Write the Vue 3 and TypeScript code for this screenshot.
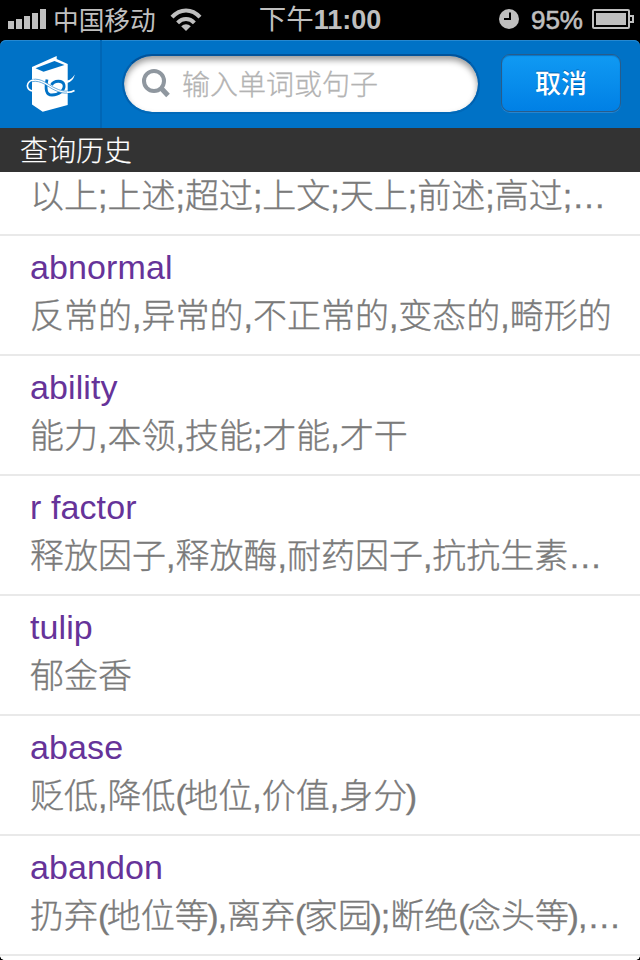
<script setup lang="ts">
interface Entry {
  word?: string
  meaning: string
}

interface Run {
  text: string
  kind: 'open' | 'close' | 'plain'
}

const entries: Entry[] = [
  { meaning: '以上;上述;超过;上文;天上;前述;高过;…' },
  { word: 'abnormal', meaning: '反常的,异常的,不正常的,变态的,畸形的' },
  { word: 'ability', meaning: '能力,本领,技能;才能,才干' },
  { word: 'r factor', meaning: '释放因子,释放酶,耐药因子,抗抗生素…' },
  { word: 'tulip', meaning: '郁金香' },
  { word: 'abase', meaning: '贬低,降低(地位,价值,身分)' },
  { word: 'abandon', meaning: '扔弃(地位等),离弃(家园);断绝(念头等),…' },
]

// Parentheses are set tighter than the surrounding text.
function runs(text: string): Run[] {
  return text
    .split(/([()])/)
    .filter((part) => part !== '')
    .map((part) => ({
      text: part,
      kind: part === '(' ? 'open' : part === ')' ? 'close' : 'plain',
    }))
}
</script>

<template>
  <div class="screen">
    <div class="status">
      <div class="status-left">
        <svg class="signal" width="38" height="20" viewBox="0 0 38 20" fill="#bfbfbf">
          <rect x="0" y="12" width="6" height="8" />
          <rect x="8" y="10" width="6" height="10" />
          <rect x="16" y="7" width="6" height="13" />
          <rect x="24" y="4" width="6" height="16" />
          <rect x="32" y="0" width="6" height="20" />
        </svg>
        <span class="carrier">中国移动</span>
        <svg class="wifi" width="32" height="24" viewBox="0 0 32 24" fill="none" stroke="#bfbfbf" stroke-width="4">
          <path d="M2 9.2C10 .3 22 .3 30 9.2" />
          <path d="M7.6 14.9C12.5 9.8 19.5 9.8 24.4 14.9" />
          <path d="M16 23L11.2 18.3C14 15.6 18 15.6 20.8 18.3Z" fill="#bfbfbf" stroke="none" />
        </svg>
      </div>
      <div class="time"><span class="period">下午</span>11:00</div>
      <div class="status-right">
        <svg width="20" height="20" viewBox="0 0 20 20">
          <circle cx="10" cy="10" r="10" fill="#bfbfbf" />
          <path d="M11 3.5V10H5" fill="none" stroke="#000" stroke-width="2" />
        </svg>
        <span class="percent">95%</span>
        <svg class="battery" width="42" height="20" viewBox="0 0 42 20">
          <rect x="1" y="1" width="36" height="18" rx="1" fill="none" stroke="#bfbfbf" stroke-width="2" />
          <rect x="4" y="4" width="30" height="12" fill="#bfbfbf" />
          <path d="M38 7H41V13H38" fill="none" stroke="#bfbfbf" stroke-width="2" />
        </svg>
      </div>
    </div>

    <header class="bar">
      <div class="logo">
        <svg width="52" height="60" viewBox="0 0 52 60" fill="none">
          <path d="M6 13L30.7 2V5L41.7 10V51L16.7 57.7L6 50.5Z" fill="#fff" />
          <path d="M9.5 14.3L28.5 7L38.5 11L17.500 17.7Z" fill="#0072c6" />
          <path d="M21 25.5C19 35 20 41 26 41C33 41 39 36 38 31C37 26 28 26 25.500 31" stroke="#0072c6" stroke-width="2.800" />
          <path d="M6 26.500C15 24 22 32 29 35C34 37.500 38 38.500 42 38" stroke="#fff" stroke-width="2.200" />
          <path d="M6 25.500C16 23.500 22 31 29 34C34 36.500 38 37.500 42 37" stroke="#0072c6" stroke-width=".6" />
          <path d="M6 27.700C15 25.500 22 33.200 29 36.300C34 38.700 38 39.500 42 39" stroke="#0072c6" stroke-width=".6" />
          <path d="M6.500 37C1 36 0 30.500 3.500 27.500C5 26.200 6.500 26 8 26.300" stroke="#fff" stroke-width="1.600" />
          <path d="M41 38.300C44 38.500 46.500 37.700 48.500 36.500" stroke="#fff" stroke-width="1.500" />
          <path d="M41 29C45 28 48 25 48.700 20.500C46.500 24.500 44 26 41 26.500Z" fill="#fff" />
        </svg>
      </div>
      <div class="search">
        <svg width="30" height="32" viewBox="0 0 30 32" fill="none" stroke="#8f979f">
          <circle cx="13" cy="13" r="10" stroke-width="4" />
          <path d="M20 20L27 27.500" stroke-width="5" />
        </svg>
        <span class="placeholder">输入单词或句子</span>
      </div>
      <button class="cancel" type="button">取消</button>
    </header>

    <h2 class="section">查询历史</h2>

    <ul class="list">
      <li v-for="(entry, index) in entries" :key="index" class="row">
        <div v-if="entry.word" class="word">{{ entry.word }}</div>
        <div class="meaning"><span v-for="(run, i) in runs(entry.meaning)" :key="i" :class="run.kind">{{ run.text }}</span></div>
      </li>
    </ul>
    <i class="corner corner-left"></i>
    <i class="corner corner-right"></i>
  </div>
</template>

<style>
body {
  margin: 0;
  background: #000;
}
</style>

<style scoped>
.screen {
  position: relative;
  display: flex;
  flex-direction: column;
  width: 640px;
  height: 960px;
  overflow: hidden;
  background: #000;
  font-family: "Liberation Sans", "Noto Sans CJK SC", sans-serif;
}
.status {
  display: grid;
  grid-template-columns: 1fr auto 1fr;
  align-items: center;
  flex: none;
  height: 40px;
  box-sizing: border-box;
  padding: 0 6px 0 8px;
  color: #bfbfbf;
  font-size: 26px;
  line-height: 38px;
}
.status-left,
.status-right {
  display: flex;
  align-items: center;
}
.status-left {
  margin-top: -2px;
}
.status-right {
  justify-content: flex-end;
  margin-top: -2px;
}
.carrier {
  margin: 3px 0 0 7px;
  font-size: 25.7px;
}
.wifi {
  margin: 2px 0 0 14px;
}
.time {
  margin-right: 2px;
  font-size: 27px;
  font-weight: 700;
}
.period {
  font-size: 27.5px;
  font-weight: 400;
}
.percent {
  margin-left: 12px;
  padding-top: 2px;
  -webkit-text-stroke: 0.6px #bfbfbf;
}
.battery {
  margin-left: 9px;
}
.bar {
  display: flex;
  align-items: center;
  flex: none;
  height: 88px;
  box-sizing: border-box;
  border-radius: 6px 6px 0 0;
  background: #0072c6;
  box-shadow: inset 0 1px #2688d0;
}
.logo {
  display: flex;
  align-items: center;
  width: 102px;
  height: 88px;
  box-sizing: border-box;
  padding-left: 26px;
  border-right: 2px solid #0066b5;
}
.search {
  display: flex;
  align-items: center;
  width: 358px;
  height: 60px;
  box-sizing: border-box;
  margin: -1px 0 0 20px;
  padding-left: 17px;
  border: 2px solid #0061af;
  border-top-color: #00539b;
  border-bottom-color: #0069b9;
  border-radius: 30px;
  background: #fff;
  background-clip: padding-box;
  box-shadow: inset 0 4px 6px rgba(0, 0, 0, 0.4);
}
.placeholder {
  padding-top: 5px;
  margin-left: 11px;
  color: #b3b3b3;
  font-size: 28px;
  font-weight: 300;
  line-height: 40px;
  -webkit-text-stroke: 0.3px #b3b3b3;
}
.cancel {
  width: 120px;
  height: 58px;
  margin: -2px 0 0 21px;
  padding: 2px 0 0;
  border: 1px solid #285c8b;
  border-radius: 9px;
  background: linear-gradient(#109af3, #0080e5);
  box-shadow: inset 0 1px 1px #0874c5, 0 1px #2785ce;
  color: #fff;
  font-family: inherit;
  font-size: 26px;
  font-weight: 500;
  line-height: 54px;
  text-shadow: 0 -1px #0062b0;
}
.section {
  flex: none;
  height: 44px;
  box-sizing: border-box;
  margin: 0;
  padding: 3px 0 0 20px;
  background: #333;
  color: #fff;
  font-size: 28px;
  font-weight: 300;
  line-height: 41px;
  -webkit-text-stroke: 0.2px #fff;
}
.list {
  display: flex;
  flex: 1;
  flex-direction: column;
  justify-content: flex-end;
  min-height: 0;
  margin: 0;
  padding: 0 0 4px;
  overflow: hidden;
  background: #fff;
  list-style: none;
}
.row {
  display: flex;
  flex: none;
  flex-direction: column;
  justify-content: flex-end;
  height: 120px;
  box-sizing: border-box;
  padding: 0 0 14px 30px;
  border-bottom: 2px solid #e9e9e9;
  font-size: 34px;
  line-height: 48px;
  white-space: nowrap;
}
.row:first-child {
  height: 64px;
}
.word {
  height: 48px;
  color: #663399;
  letter-spacing: 0.1px;
}
.meaning {
  height: 49px;
  padding-top: 1px;
  box-sizing: border-box;
  color: #7a7a7a;
  font-weight: 300;
  -webkit-text-stroke: 0.35px #7a7a7a;
}
.open {
  letter-spacing: -2.5px;
}
.close {
  margin-left: -1.5px;
  letter-spacing: -1px;
}
.corner {
  position: absolute;
  bottom: 0;
  width: 4px;
  height: 4px;
}
.corner-left {
  left: 0;
  background: radial-gradient(circle at 100% 0, transparent 3.5px, #000 4px);
}
.corner-right {
  right: 0;
  background: radial-gradient(circle at 0 0, transparent 3.5px, #000 4px);
}
</style>
